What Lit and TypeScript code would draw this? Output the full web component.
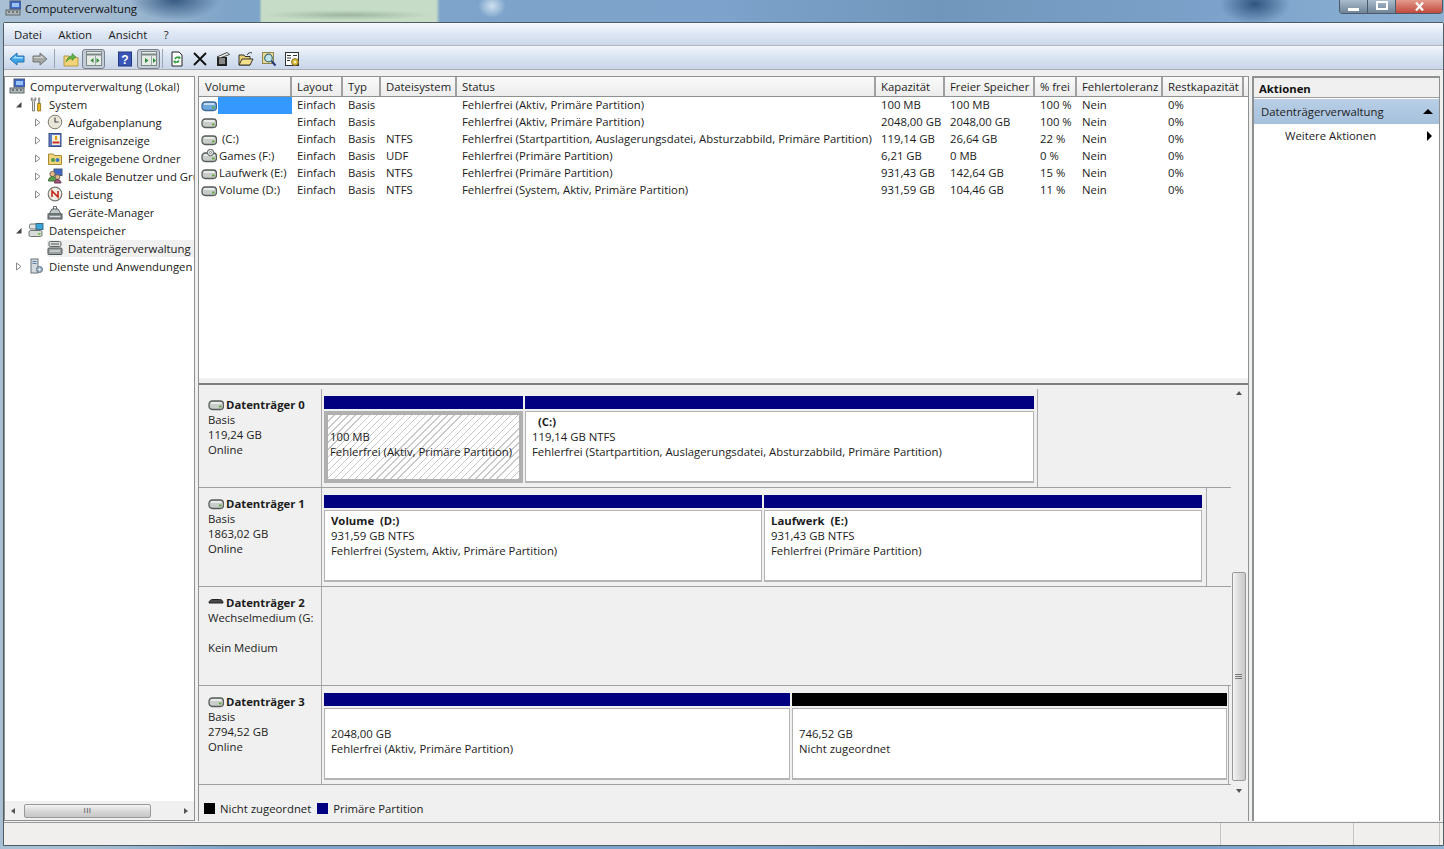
import { LitElement, css, html, svg } from 'lit'
import { customElement } from 'lit/decorators.js'

// drive icon, shared by the volume list and the disk labels
const drive = (body = '#c8cdc9', edge = '#555c59') => svg`
  <rect x="1" y="4" width="14.500" height="8.500" rx="3.200" fill=${body} stroke=${edge} stroke-width="1.300"/>
  <path d="M3 6h10.500" stroke="#fff" stroke-opacity=".85" stroke-width="1.400"/>
  <rect x="11" y="8.600" width="2.600" height="1.800" fill="#5fa83a"/>`

const icons: Record<string, unknown> = {
  mmc: svg`<rect x="5" y="1" width="11" height="8" fill="#3f69c9" stroke="#4b5a76"/><rect x="7" y="3" width="7" height="4" fill="#9cc2f2"/><rect x="1" y="10" width="14" height="5" fill="#aeb6b8" stroke="#5d6668"/><path d="M3 12h2M7 12h2M11 12h2" stroke="#333"/>`,
  tools: svg`<path d="M4 1.500C2.500 2.500 3 5 4.500 5.500V15h2V5.500C8 5 8.500 2.500 7 1.500V4H4z" fill="#e6e6e6" stroke="#666" stroke-width=".8"/><rect x="10" y="1.500" width="2.200" height="6" fill="#999"/><path d="M9.600 7.500h3v7.500h-3z" fill="#f1b71c" stroke="#8a6a10" stroke-width=".8"/>`,
  clock: svg`<circle cx="8" cy="8" r="6.800" fill="#e9e6d7" stroke="#7e7d70"/><path d="M8 3.500V8h3.500" fill="none" stroke="#444" stroke-width="1.100"/>`,
  log: svg`<rect x="2" y="1.500" width="12" height="13" fill="#5a7fc6" stroke="#3a4a80"/><rect x="5" y="3" width="8" height="10" fill="#f4efd8"/><path d="M9 4v4" stroke="#e0a000" stroke-width="2"/><path d="M5.500 10.500h7" stroke="#c33" stroke-width="2"/>`,
  share: svg`<path d="M1.500 4h5l1 1.500h7v9h-13z" fill="#f2d57a" stroke="#a78a35"/><circle cx="6" cy="10" r="2" fill="#4f9a4c"/><circle cx="10.500" cy="10" r="2" fill="#3c78c6"/>`,
  users: svg`<rect x="7" y="1" width="8" height="6.500" fill="#3f69c9" stroke="#4b5a76"/><circle cx="5.500" cy="6" r="2.600" fill="#e7b98e" stroke="#7d6a50"/><path d="M1.500 13c0-3 2-4.500 4-4.500s4 1.500 4 4.500z" fill="#5aa04c" stroke="#3d6b35"/><circle cx="10.500" cy="9" r="2.300" fill="#e7b98e" stroke="#7d6a50"/><path d="M7.500 15c0-2.500 1.500-3.500 3-3.500s3.500 1 3.500 3.500z" fill="#a0557a" stroke="#6a3852"/>`,
  perf: svg`<circle cx="8" cy="8" r="6.800" fill="#f0eee4" stroke="#77776c" stroke-width="1.200"/><path d="M5 11V5l6 6V5" fill="none" stroke="#c4281c" stroke-width="1.600"/>`,
  devmgr: svg`<path d="M6.500 5V2.500h3V5" fill="none" stroke="#666"/><path d="M5 5h6l3 5H2z" fill="#c2c8ca" stroke="#5d6668"/><rect x="1" y="10" width="14" height="5" fill="#8c9496" stroke="#4e5557"/><path d="M3 12.500h10" stroke="#dde"/>`,
  store: svg`<rect x="1.500" y="2" width="8" height="5" rx="1.500" fill="#e3e6e3" stroke="#6f7672"/><rect x="8" y="1.500" width="7" height="6" fill="#3ba5d8" stroke="#3c6a88"/><rect x="1" y="8.500" width="13" height="6" rx="1.500" fill="#d8dcd8" stroke="#6f7672"/><rect x="10" y="11" width="2.500" height="1.600" fill="#6dbb3f"/>`,
  diskmgr: svg`<rect x="2" y="1.500" width="12" height="5" rx="1.500" fill="#dcdfdc" stroke="#5d6668"/><path d="M4 4h8" stroke="#555"/><rect x="1" y="8" width="14" height="6.500" rx="1" fill="#9aa2a4" stroke="#4e5557"/><path d="M3 11h10" stroke="#eee"/>`,
  services: svg`<rect x="3" y="1" width="7" height="14" fill="#d5dade" stroke="#69737a"/><path d="M4.500 3.500h4M4.500 5.500h4" stroke="#5b7fa6"/><circle cx="11.500" cy="11.500" r="3" fill="#9fb6c9" stroke="#5d7488"/><circle cx="11.500" cy="11.500" r="1" fill="#fff"/>`,
  hdd: drive(),
  hddBlue: drive('#6fa8dc', '#3e6a96'),
  hddCd: svg`${drive()}<circle cx="9.500" cy="3.500" r="3.200" fill="#e3e6e8" stroke="#555c59"/><circle cx="9.500" cy="3.500" r="1" fill="#fff" stroke="#555c59" stroke-width=".6"/>`,
  hddBlack: svg`<path d="M1 8C1 5.500 3 4.500 5 4.500h6.500c2 0 3.500 1 3.500 3.500z" fill="#4a4a4a" stroke="#222"/>`,
}

const icon = (name: string) => html`<svg class="ico" viewBox="0 0 16 16">${icons[name]}</svg>`

const toolIcons: Record<string, unknown> = {
  back: svg`<path d="M1 8l7-6v3h7v6H8v3z" fill="#3da3e8" stroke="#2a74b0"/><path d="M3 8l4-3.500V6h7v1.500H4z" fill="#a5dcfa"/>`,
  fwd: svg`<path d="M15 8L8 2v3H1v6h7v3z" fill="#a4a6a4" stroke="#757775"/><path d="M2 6h7V4.500L12 7H2z" fill="#d4d4d2"/>`,
  up: svg`<path d="M1 5h5l1 1.500h8V15H1z" fill="#f3d478" stroke="#b59a4a"/><path d="M3 11c1-4 3-6 6-6V2.500L13 6 9 9.500V7.500c-2 0-4 1-6 3.500z" fill="#5fb548" stroke="#3f8030" stroke-width=".6"/>`,
  left: svg`<rect x=".5" y=".5" width="15" height="14" fill="#e6ebe6" stroke="#7d8a8a"/><path d="M.5 3.500h15" stroke="#7d8a8a" stroke-width="2"/><path d="M9.500 4.500v10" stroke="#9aa"/><path d="M7.500 7v5L4.500 9.500z" fill="#2f8a3a"/><path d="M10.500 7v5l3-2.500z" fill="#2f8a3a"/>`,
  help: svg`<rect x="1.500" y="1" width="13" height="14" fill="#3756b8" stroke="#26387c"/><text x="8" y="12.500" text-anchor="middle" font-size="12" font-weight="700" font-family="Liberation Sans" fill="#fff">?</text>`,
  right: svg`<rect x=".5" y=".5" width="15" height="14" fill="#e6ebe6" stroke="#7d8a8a"/><path d="M.5 3.500h15" stroke="#7d8a8a" stroke-width="2"/><path d="M10.500 4.500v10" stroke="#9aa"/><path d="M4 7v5l3.500-2.500z" fill="#2f8a3a"/><path d="M12 7v5l3-2.500z" fill="#2f8a3a"/>`,
  refresh: svg`<path d="M3 1h7l3 3v11H3z" fill="#fff" stroke="#222"/><path d="M5.500 8c0-2 2-3 4-2V4.500L12 7 9.500 8.500V7.300c-1-.5-2.200 0-2.500 1z" fill="#2f9a3a"/><path d="M10.500 9.500c0 2-2 3-4 2V13L4 10.500 6.500 9v1.200c1 .5 2.200 0 2.500-1z" fill="#2f9a3a"/>`,
  del: svg`<path d="M2 2l12 12M14 2L2 14" stroke="#111" stroke-width="1.900"/>`,
  props: svg`<path d="M2 6h10v9H2z" fill="#222"/><path d="M4 8h6M4 10h6M4 12h6" stroke="#eee"/><path d="M2 6l10-4.500 2.500 2L5 7z" fill="#eee" stroke="#222" stroke-width=".8"/>`,
  open: svg`<path d="M1 4h5l1 1.500h5V14H1z" fill="#ecd070" stroke="#333"/><path d="M1 14l3-6h11l-3 6z" fill="#f5e08c" stroke="#333"/><path d="M9 4c1-2 3-3 5-2" fill="none" stroke="#333"/>`,
  find: svg`<rect x="1.500" y="1.500" width="11" height="11" fill="#ecdc9a" stroke="#8d8450"/><circle cx="7.500" cy="7" r="3.800" fill="#bfe4ea" stroke="#3c6a78" stroke-width="1.200"/><path d="M10.500 10l4 4.500" stroke="#26387c" stroke-width="2"/>`,
  settings: svg`<rect x="1.500" y="1.500" width="13" height="13" fill="#fff" stroke="#333"/><path d="M3 4.500h4M3 7h4M3 9.500h3M9 4.500h4" stroke="#333"/><circle cx="11" cy="11" r="3.400" fill="#e3c23c" stroke="#7a6a20"/><circle cx="11" cy="11" r="1" fill="#fff"/>`,
}

const tool = (name: string) => html`<svg class="tool" viewBox="0 0 16 16">${toolIcons[name]}</svg>`

const treeArrow = (kind: string) => kind === 'open'
  ? html`<svg class="tw" viewBox="0 0 9 9"><path d="M7.500 2v5.500H2z" fill="#444"/></svg>`
  : html`<svg class="tw" viewBox="0 0 9 9"><path d="M2.500 1l4.500 3.500L2.500 8z" fill="#fff" stroke="#8a8a8a"/></svg>`

const treeRows = [
  { depth: 0, arrow: '', icon: 'mmc', label: 'Computerverwaltung (Lokal)' },
  { depth: 1, arrow: 'open', icon: 'tools', label: 'System' },
  { depth: 2, arrow: 'closed', icon: 'clock', label: 'Aufgabenplanung' },
  { depth: 2, arrow: 'closed', icon: 'log', label: 'Ereignisanzeige' },
  { depth: 2, arrow: 'closed', icon: 'share', label: 'Freigegebene Ordner' },
  { depth: 2, arrow: 'closed', icon: 'users', label: 'Lokale Benutzer und Gruppen' },
  { depth: 2, arrow: 'closed', icon: 'perf', label: 'Leistung' },
  { depth: 2, arrow: '', icon: 'devmgr', label: 'Geräte-Manager' },
  { depth: 1, arrow: 'open', icon: 'store', label: 'Datenspeicher' },
  { depth: 2, arrow: '', icon: 'diskmgr', label: 'Datenträgerverwaltung', selected: true },
  { depth: 1, arrow: 'closed', icon: 'services', label: 'Dienste und Anwendungen' },
]

const columns = ['Volume', 'Layout', 'Typ', 'Dateisystem', 'Status', 'Kapazität', 'Freier Speicher', '% frei', 'Fehlertoleranz', 'Restkapazität']

const volumes = [
  { icon: 'hddBlue', name: '', sel: true, fs: '', status: 'Fehlerfrei (Aktiv, Primäre Partition)', cap: '100 MB', free: '100 MB', pct: '100 %' },
  { icon: 'hdd', name: '', fs: '', status: 'Fehlerfrei (Aktiv, Primäre Partition)', cap: '2048,00 GB', free: '2048,00 GB', pct: '100 %' },
  { icon: 'hdd', name: '\u00a0(C:)', fs: 'NTFS', status: 'Fehlerfrei (Startpartition, Auslagerungsdatei, Absturzabbild, Primäre Partition)', cap: '119,14 GB', free: '26,64 GB', pct: '22 %' },
  { icon: 'hddCd', name: 'Games (F:)', fs: 'UDF', status: 'Fehlerfrei (Primäre Partition)', cap: '6,21 GB', free: '0 MB', pct: '0 %' },
  { icon: 'hdd', name: 'Laufwerk (E:)', fs: 'NTFS', status: 'Fehlerfrei (Primäre Partition)', cap: '931,43 GB', free: '142,64 GB', pct: '15 %' },
  { icon: 'hdd', name: 'Volume (D:)', fs: 'NTFS', status: 'Fehlerfrei (System, Aktiv, Primäre Partition)', cap: '931,59 GB', free: '104,46 GB', pct: '11 %' },
]

type Part = { w: number; name?: string; lines: string[]; hatch?: boolean; black?: boolean }
type Disk = { icon: string; title: string; info: string[]; width?: number; parts: Part[] }

const disks: Disk[] = [
  {
    icon: 'hdd', title: 'Datenträger 0', info: ['Basis', '119,24 GB', 'Online'], width: 716,
    parts: [
      { w: 199, hatch: true, lines: ['100 MB', 'Fehlerfrei (Aktiv, Primäre Partition)'] },
      { w: 509, name: '\u00a0\u00a0(C:)', lines: ['119,14 GB NTFS', 'Fehlerfrei (Startpartition, Auslagerungsdatei, Absturzabbild, Primäre Partition)'] },
    ],
  },
  {
    icon: 'hdd', title: 'Datenträger 1', info: ['Basis', '1863,02 GB', 'Online'], width: 885,
    parts: [
      { w: 438, name: 'Volume  (D:)', lines: ['931,59 GB NTFS', 'Fehlerfrei (System, Aktiv, Primäre Partition)'] },
      { w: 438, name: 'Laufwerk  (E:)', lines: ['931,43 GB NTFS', 'Fehlerfrei (Primäre Partition)'] },
    ],
  },
  { icon: 'hddBlack', title: 'Datenträger 2', info: ['Wechselmedium (G:', '\u00a0', 'Kein Medium'], parts: [] },
  {
    icon: 'hdd', title: 'Datenträger 3', info: ['Basis', '2794,52 GB', 'Online'],
    parts: [
      { w: 466, lines: ['2048,00 GB', 'Fehlerfrei (Aktiv, Primäre Partition)'] },
      { w: 435, black: true, lines: ['746,52 GB', 'Nicht zugeordnet'] },
    ],
  },
]

@customElement('app-root')
export class AppRoot extends LitElement {
  static styles = css`
    :host {
      display: block;
      width: 1444px;
      height: 849px;
      overflow: hidden;
      font-family: 'Open Sans', 'Noto Sans', sans-serif;
      font-size: 11.33px;
      color: #1c1c1c;
    }
    .glass {
      display: flex;
      flex-direction: column;
      height: 849px;
      background:
        radial-gradient(ellipse 84px 5px at 347px 15px, #9db59f 0%, transparent 100%) 0 0 / 100% 22px no-repeat,
        linear-gradient(90deg, transparent 259px, #c6dcc6 262px, #c6dcc6 436px, transparent 440px) 0 0 / 100% 22px no-repeat,
        radial-gradient(ellipse 45px 20px at 175px 0px, #365a82 0%, transparent 100%) 0 0 / 100% 22px no-repeat,
        radial-gradient(ellipse 35px 20px at 1255px 4px, #30567f 0%, transparent 100%) 0 0 / 100% 22px no-repeat,
        radial-gradient(ellipse 14px 12px at 492px 6px, #cfe0f0 0%, transparent 100%) 0 0 / 100% 22px no-repeat,
        linear-gradient(90deg, #a9bfd4 0%, #a4bcd2 100px, #7ea4c8 230px, #7ba3cb 50%, #7097bb 65%, #7ba3cb 85%, #8fb2d3 100%);
      padding: 0 0 3px 3px;
      box-sizing: border-box;
    }
    .caption {
      height: 22px;
      flex: none;
      display: flex;
      align-items: flex-start;
      padding: 0 1px 0 2px;
    }
    .caption .title { margin: 1px 0 0 4px; color: #111; }
    .capbtns {
      margin-left: auto;
      display: flex;
      height: 13px;
      border: 1px solid #4a5a6c;
      border-top: none;
      border-radius: 0 0 4px 4px;
      overflow: hidden;
    }
    .capbtn {
      width: 27px;
      display: flex;
      align-items: center;
      justify-content: center;
      background: linear-gradient(#a9bccd, #6f8498);
      border-right: 1px solid #4a5a6c;
    }
    .capbtn.close { width: 46px; border: none; background: linear-gradient(#e49a8e, #c04a3c); }
    .capbtn i { display: block; }
    .min { width: 11px; height: 3px; background: #fff; margin-top: 5px; }
    .max { width: 8px; height: 5px; border: 2px solid #fff; margin-top: -2px; }
    .x { width: 11px; height: 9px; }
    .window {
      flex: 1;
      min-height: 0;
      display: flex;
      flex-direction: column;
      background: #f0f0f0;
      border: 1px solid #4f5d62;
      border-radius: 2px 2px 0 0;
    }
    .menu {
      height: 23px;
      flex: none;
      display: flex;
      align-items: center;
      gap: 16.5px;
      padding-left: 10px;
      background: linear-gradient(#f6f9fe, #dfe8f5 45%, #ccd8ea);
      border-bottom: 1px solid #b3b7bd;
      box-sizing: border-box;
    }
    .toolbar {
      height: 24px;
      flex: none;
      display: flex;
      align-items: center;
      padding: 2px 0 0 5px;
      background: linear-gradient(#f2f6fc, #d9e3f1 50%, #c9d6e9);
      border-bottom: 1px solid #a9adb2;
      box-sizing: border-box;
    }
    .tool { width: 16px; height: 16px; flex: none; display: block; }
    .gap7 { width: 7px; flex: none; }
    .tbtn { width: 23px; display: flex; justify-content: center; flex: none; }
    .tbtn.toggled {
      height: 20px;
      align-items: center;
      box-sizing: border-box;
      background: #c3ccd6;
      border: 1px solid #79828c;
      border-radius: 3px;
    }
    .tsep { width: 1px; height: 19px; background: #9aa5b2; margin: 0 3px; flex: none; }
    .tsep.first { margin: 0 4px 0 6px; }
    .tsep.blank { visibility: hidden; margin: 0 3px 0 4px; }
    .tsep.last { margin: 0 2px; }
    .help { margin-right: 1px; }
    .body {
      flex: 1;
      min-height: 0;
      display: flex;
      padding: 6px 3px 1px 0;
      gap: 3px;
    }
    .tree {
      width: 191px;
      flex: none;
      display: flex;
      flex-direction: column;
      background: #fff;
      border: 1px solid #8e9192;
      box-sizing: border-box;
    }
    .tree-rows { flex: 1; overflow: hidden; }
    .tr {
      height: 18px;
      display: flex;
      align-items: center;
      white-space: nowrap;
    }
    .d0 { padding-left: 4px; }
    .d1 { padding-left: 5px; }
    .d2 { padding-left: 24px; }
    .arrow { width: 11px; height: 9px; flex: none; margin: 0 4px 0 3px; display: flex; justify-content: center; }
    .tw { width: 9px; height: 9px; display: block; }
    .cell { display: flex; align-items: center; flex: 1; min-width: 0; height: 17px; }
    .tr .ico { margin-right: 5px; }
    .tr.sel .cell { background: #f0f0f0; }
    .lab { overflow: hidden; }
    .ico { width: 16px; height: 16px; flex: none; display: block; }
    .hscroll {
      height: 19px;
      flex: none;
      display: flex;
      align-items: center;
      background: #f0f0f0;
      padding: 0 6px;
    }
    .hscroll .thumb {
      margin-left: 9px;
      width: 127px;
      height: 14px;
      border: 1px solid #979a9c;
      border-radius: 2px;
      background: linear-gradient(#f4f4f4, #d8d8d8 50%, #c6c6c6);
      box-sizing: border-box;
      font-family: 'Liberation Sans', sans-serif;
      font-size: 8px;
      letter-spacing: .5px;
      line-height: 11px;
      text-align: center;
      color: #555;
    }
    .tri-l, .tri-r { width: 0; height: 0; border-top: 3.500px solid transparent; border-bottom: 3.500px solid transparent; }
    .tri-l { border-right: 4px solid #555; }
    .tri-r { border-left: 4px solid #555; margin-left: auto; }
    .center {
      width: 1051px;
      flex: none;
      display: flex;
      flex-direction: column;
      border: 1px solid #8e9192;
      border-bottom: none;
      box-sizing: border-box;
    }
    .list {
      height: 301px;
      flex: none;
      background: #fff;
      overflow: hidden;
    }
    .row {
      display: grid;
      grid-template-columns: 93px 51px 38px 76px 419px 69px 90px 42px 86px 81px;
      white-space: nowrap;
    }
    .hdr {
      height: 19px;
      background: linear-gradient(#fafafa, #ececec);
      border-bottom: 1px solid #8e9192;
    }
    .hdr div {
      padding: 2px 0 0 5px;
      border-right: 2px solid #a0a0a0;
      overflow: hidden;
      box-sizing: border-box;
    }
    .hdr div:first-child { padding-left: 6px; }
    .vr { height: 17px; line-height: 16px; }
    .vr > div { padding-left: 5px; overflow: hidden; }
    .vr > .vol { padding-left: 2px; display: flex; align-items: center; }
    .nm { flex: 1; height: 100%; margin-left: 2px; overflow: hidden; }
    .nm.sel { background: #3399ff; margin-left: 1px; }
    .split {
      height: 7px;
      flex: none;
      background: #f0f0f0;
      border-bottom: 2px solid #7d8081;
      box-sizing: border-box;
    }
    .graphic {
      flex: 1;
      min-height: 0;
      display: flex;
      background: #f0f0f0;
    }
    .disks { flex: 1; min-width: 0; display: flex; flex-direction: column; padding-top: 4px; }
    .disk {
      height: 99px;
      flex: none;
      display: flex;
      box-sizing: border-box;
      border-bottom: 1px solid #a0a0a0;
    }
    .dinfo {
      width: 123px;
      flex: none;
      box-sizing: border-box;
      padding: 8px 6px 0 9px;
      border-right: 1px solid #a8a8a8;
      line-height: 15px;
      overflow: hidden;
      white-space: nowrap;
    }
    .dhead { display: flex; align-items: center; font-weight: 700; height: 15px; }
    .dhead .ico { margin-right: 2px; }
    .parts {
      display: flex;
      gap: 2px;
      box-sizing: border-box;
      padding: 7px 1px 4px 2px;
      height: 98px;
      border-right: 1px solid #a8a8a8;
    }
    .parts.empty { border: none; }
    .part { display: flex; flex-direction: column; flex: none; }
    .bar { height: 13px; background: #000080; flex: none; }
    .bar.black { background: #000; }
    .pbox {
      flex: 1;
      margin-top: 2px;
      padding: 2px 3px 0 6px;
      background: #fff;
      border: 1px solid #b4b4b4;
      border-bottom-width: 2px;
      line-height: 15px;
      box-sizing: border-box;
      white-space: nowrap;
      overflow: hidden;
    }
    .pbox.hatch {
      border: 4px solid #b0b0b0;
      padding: 0 0 0 2px;
      background: repeating-linear-gradient(135deg, #fff 0 4px, #c8c8c8 4px 5px);
    }
    .pbox b { display: block; white-space: pre; }
    .sp { height: 15px; }
    .hatch .sp { height: 14px; }
    .vbar {
      width: 17px;
      flex: none;
      display: flex;
      flex-direction: column;
      align-items: center;
      background: #f0f0f0;
      padding: 6px 2px 6px 0;
      box-sizing: border-box;
    }
    .vbar .gap { flex: 1; }
    .vthumb {
      width: 14px;
      flex: none;
      height: 209px;
      border: 1px solid #979a9c;
      border-radius: 2px;
      box-sizing: border-box;
      background: linear-gradient(90deg, #f4f4f4, #dcdcdc 50%, #c8c8c8);
      display: flex;
      align-items: center;
      justify-content: center;
      margin-bottom: 8px;
    }
    .vthumb i { display: block; width: 7px; height: 5px; border-top: 1px solid #777; border-bottom: 1px solid #777; background: linear-gradient(transparent 1px, #777 1px 2px, transparent 2px); box-sizing: border-box; }
    .tri-u, .tri-d { width: 0; height: 0; border-left: 3.500px solid transparent; border-right: 3.500px solid transparent; }
    .tri-u { border-bottom: 4px solid #555; }
    .tri-d { border-top: 4px solid #555; }
    .legend {
      height: 22px;
      flex: none;
      display: flex;
      align-items: center;
      padding: 0 0 3px 5px;
      box-sizing: border-box;
      background: #f0f0f0;
    }
    .sw { width: 11px; height: 11px; margin-right: 5px; flex: none; }
    .sw.black { background: #000; }
    .sw.navy { background: #000080; }
    .legend span { margin-right: 6px; }
    .actions {
      flex: 1;
      min-width: 0;
      display: flex;
      flex-direction: column;
      background: #fff;
      border: 1px solid #8e9192;
      border-left-width: 2px;
      border-top-width: 2px;
      border-bottom: none;
      box-sizing: border-box;
    }
    .ah {
      height: 19px;
      flex: none;
      font-weight: 700;
      padding-left: 5px;
      line-height: 21px;
      background: #f0f0f0;
      border-bottom: 1px solid #a0a0a0;
      color: #111;
    }
    .asub {
      height: 25px;
      flex: none;
      margin-top: 1px;
      display: flex;
      align-items: center;
      padding: 0 6px 0 7px;
      background: linear-gradient(#b8cfe6, #a6c0dc);
      justify-content: space-between;
    }
    .aitem {
      height: 23px;
      flex: none;
      display: flex;
      align-items: center;
      padding: 0 7px 0 31px;
      justify-content: space-between;
    }
    .tri-big-u { width: 0; height: 0; border-left: 5px solid transparent; border-right: 5px solid transparent; border-bottom: 5px solid #000; }
    .tri-big-r { width: 0; height: 0; border-top: 5px solid transparent; border-bottom: 5px solid transparent; border-left: 5px solid #000; }
    .status {
      height: 23px;
      flex: none;
      display: flex;
      background: #f1eeee;
      border-top: 1px solid #9a9a9a;
      box-sizing: border-box;
    }
    .status div { border-right: 1px solid #c4c4c4; box-sizing: border-box; }
    .s1 { width: 1217px; }
    .s2 { width: 133px; }
    .s3 { width: 86px; }
  `

  private renderTree() {
    return treeRows.map((r) => html`
      <div class="tr d${r.depth} ${r.selected ? 'sel' : ''}">
        ${r.depth === 0 ? '' : html`<span class="arrow">${r.arrow ? treeArrow(r.arrow) : ''}</span>`}
        <span class="cell">${icon(r.icon)}<span class="lab">${r.label}</span></span>
      </div>
    `)
  }

  private renderDisk(d: Disk) {
    return html`
      <div class="disk">
        <div class="dinfo">
          <div class="dhead">${icon(d.icon)}${d.title}</div>
          ${d.info.map((t) => html`<div>${t}</div>`)}
        </div>
        <div class="parts ${d.parts.length ? '' : 'empty'}" style=${d.width ? `width:${d.width}px` : ''}>
          ${d.parts.map((p) => html`
            <div class="part" style="width:${p.w}px">
              <div class="bar ${p.black ? 'black' : ''}"></div>
              <div class="pbox ${p.hatch ? 'hatch' : ''}">
                ${p.name ? html`<b>${p.name}</b>` : html`<div class="sp"></div>`}
                ${p.lines.map((t) => html`<div>${t}</div>`)}
              </div>
            </div>
          `)}
        </div>
      </div>
    `
  }

  render() {
    return html`
      <div class="glass">
        <div class="caption">
          ${icon('mmc')}
          <span class="title">Computerverwaltung</span>
          <div class="capbtns">
            <div class="capbtn"><i class="min"></i></div>
            <div class="capbtn"><i class="max"></i></div>
            <div class="capbtn close">
              <svg class="x" viewBox="0 0 11 9"><path d="M2 .5l7 8M9 .5l-7 8" stroke="#fff" stroke-width="2.200"/></svg>
            </div>
          </div>
        </div>
        <div class="window">
          <div class="menu">
            <span>Datei</span><span>Aktion</span><span>Ansicht</span><span>?</span>
          </div>
          <div class="toolbar">
            ${tool('back')}
            <span class="gap7"></span>
            ${tool('fwd')}
            <div class="tsep first"></div>
            <div class="tbtn">${tool('up')}</div>
            <div class="tbtn toggled">${tool('left')}</div>
            <div class="tsep blank"></div>
            <div class="tbtn help">${tool('help')}</div>
            <div class="tbtn toggled">${tool('right')}</div>
            <div class="tsep last"></div>
            <div class="tbtn">${tool('refresh')}</div>
            <div class="tbtn">${tool('del')}</div>
            <div class="tbtn">${tool('props')}</div>
            <div class="tbtn">${tool('open')}</div>
            <div class="tbtn">${tool('find')}</div>
            <div class="tbtn">${tool('settings')}</div>
          </div>
          <div class="body">
            <div class="tree">
              <div class="tree-rows">${this.renderTree()}</div>
              <div class="hscroll">
                <div class="tri-l"></div>
                <div class="thumb">III</div>
                <div class="tri-r"></div>
              </div>
            </div>
            <div class="center">
              <div class="list">
                <div class="row hdr">${columns.map((c) => html`<div>${c}</div>`)}</div>
                ${volumes.map((v) => html`
                  <div class="row vr">
                    <div class="vol">${icon(v.icon)}<span class="nm ${v.sel ? 'sel' : ''}">${v.name}</span></div>
                    <div>Einfach</div>
                    <div>Basis</div>
                    <div>${v.fs}</div>
                    <div>${v.status}</div>
                    <div>${v.cap}</div>
                    <div>${v.free}</div>
                    <div>${v.pct}</div>
                    <div>Nein</div>
                    <div>0%</div>
                  </div>
                `)}
              </div>
              <div class="split"></div>
              <div class="graphic">
                <div class="disks">${disks.map((d) => this.renderDisk(d))}</div>
                <div class="vbar">
                  <div class="tri-u"></div>
                  <div class="gap"></div>
                  <div class="vthumb"><i></i></div>
                  <div class="tri-d"></div>
                </div>
              </div>
              <div class="legend">
                <div class="sw black"></div><span>Nicht zugeordnet</span>
                <div class="sw navy"></div><span>Primäre Partition</span>
              </div>
            </div>
            <div class="actions">
              <div class="ah">Aktionen</div>
              <div class="asub"><span>Datenträgerverwaltung</span><i class="tri-big-u"></i></div>
              <div class="aitem"><span>Weitere Aktionen</span><i class="tri-big-r"></i></div>
            </div>
          </div>
          <div class="status"><div class="s1"></div><div class="s2"></div><div class="s3"></div></div>
        </div>
      </div>
    `
  }
}
